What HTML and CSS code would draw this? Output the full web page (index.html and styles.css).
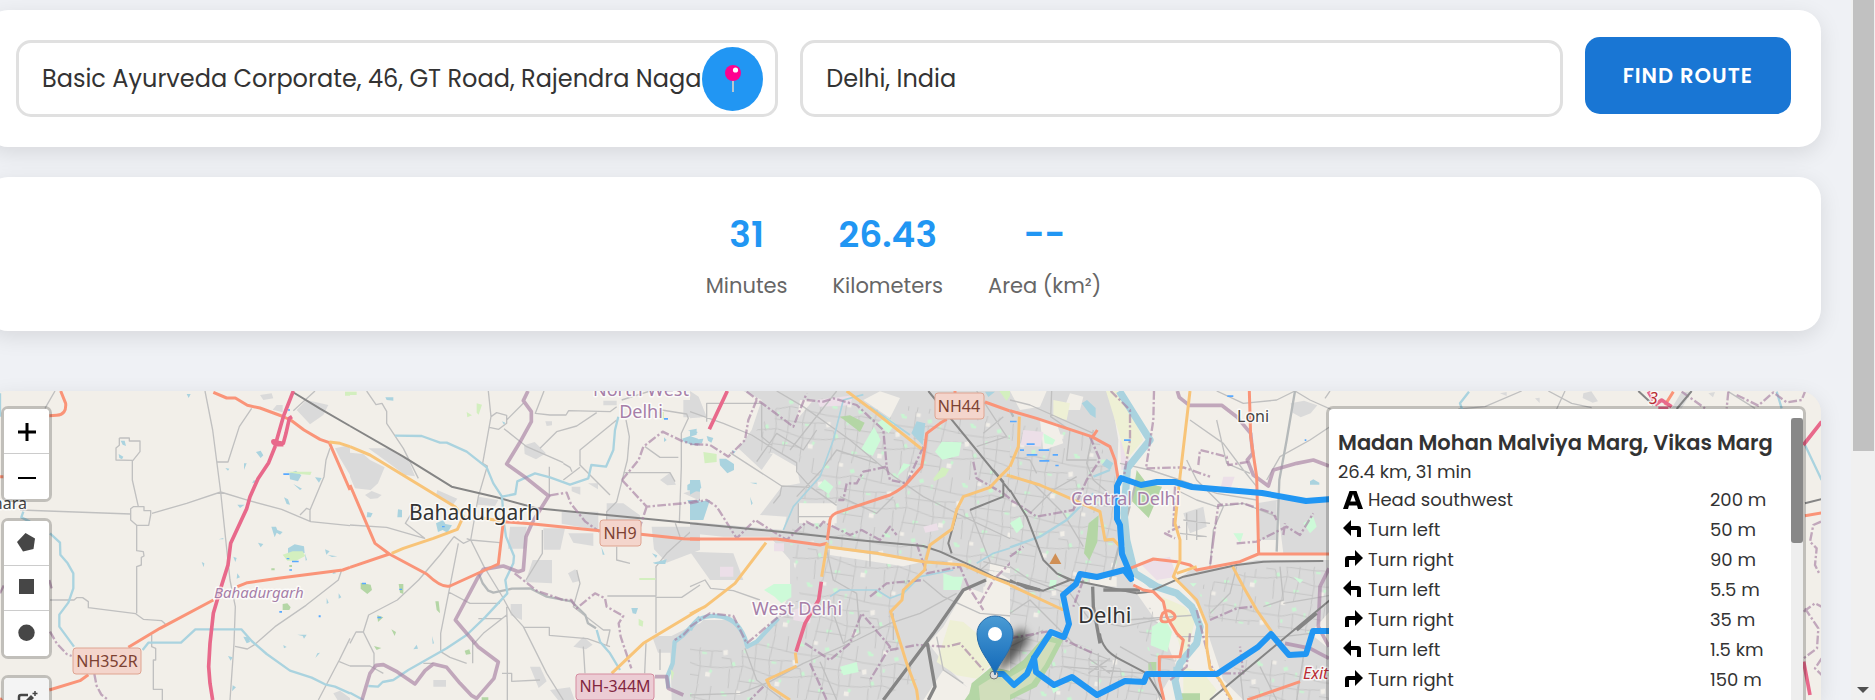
FILE: index.html
```html
<!DOCTYPE html>
<html lang="en">
<head>
<meta charset="utf-8">
<title>Route finder</title>
<meta name="viewport" content="width=device-width, initial-scale=1">
<link rel="stylesheet" href="styles.css">
</head>
<body>
<div class="page">
<main class="content">
  <form class="card search">
    <div class="field">
      <input class="field-input" type="text" aria-label="Start location" value="Basic Ayurveda Corporate, 46, GT Road, Rajendra Nagar">
      <button class="locate" type="button" aria-label="Use my location">
        <svg width="24" height="28" viewBox="0 0 24 28" aria-hidden="true"><path d="M12 13v14" stroke="#b9c6d0" stroke-width="2"/><circle cx="12" cy="8" r="8" fill="#ff0090"/><circle cx="14.500" cy="5" r="2.600" fill="#fff"/></svg>
      </button>
    </div>
    <div class="field">
      <input class="field-input" type="text" aria-label="Destination" value="Delhi, India">
    </div>
    <button class="find" type="button">FIND ROUTE</button>
  </form>

  <section class="card stats">
    <div class="stat"><div class="stat-value">31</div><div class="stat-label">Minutes</div></div>
    <div class="stat"><div class="stat-value">26.43</div><div class="stat-label">Kilometers</div></div>
    <div class="stat"><div class="stat-value">--</div><div class="stat-label">Area (km²)</div></div>
  </section>

  <section class="map">
    <svg class="tiles" viewBox="-14 391 1836 309" preserveAspectRatio="xMinYMin slice" role="img" aria-label="Map of Delhi">
      <defs>
        <pattern id="streets" width="210" height="180" patternUnits="userSpaceOnUse" patternTransform="rotate(8)">
          <path class="fleck-mint" d="M10 12h12v5h8v8h-14zM92 20l12-4 4 10-12 5zM150 82h14v6h-14zM30 104l10-6 5 12-9 4zM90 144h16v6h-6v6h-10zM64 58h6v10h-6zM180 130l8 4-4 9-6-2zM130 30h6v14h-6z"/>
          <path class="fleck-land" d="M56 4h14v10h-14zM2 70l13-4 2 14-12 4zM168 140h14v14h-14z"/>
          <path class="lane" d="M0 48h66l36-12 108 12M56 0v48l10 56-8 76M0 122l70-14 80 18 60-4M150 0l-8 80 8 46-2 54M98 36l4 82-8 62M58 80h84M142 80l68-8M0 92h28l8 28M190 0v48M180 76v48M28 122l4 58M58 154h92"/>
        </pattern>
        <linearGradient id="pin" x1="0" y1="0" x2="0" y2="1"><stop offset="0" stop-color="#4a9bd4"/><stop offset="1" stop-color="#1268b8"/></linearGradient>
        <filter id="soft" x="-50%" y="-50%" width="200%" height="200%"><feGaussianBlur stdDeviation="4"/></filter>
      </defs>
      <rect class="land" x="-14" y="391" width="1836" height="1200"/>

      <!-- western farmland -->
      <g transform="translate(0 380) scale(.33333)">
        <path class="town" d="M890 90l30-30 65 15-15 30-40 28zM1005 205l45-10v90l-30-50zM780 45l35-5 5 15-30 5zM830 75l18 0v22l-30-8zM1000 940l20-8 30 22v10h-35z"/>
        <path class="minor" d="M615 33L638 150 662 336 690 600 706 680 702 790 690 960M662 336L747 362 845 388 932 425 1050 437M662 336L560 370 456 400M392 402L60 390M397 240V300L415 380M358 174H388V183H420V215L399 241 348 240V204L358 196V174M400 380H432V392H452V405L446 436H410L392 420V386zM410 436V512L430 515 432 528 424 532V555L410 560V700M150 660H222L230 653H248L265 665V683L407 701 430 718 485 722 496 732M652 246H684L718 140 755 85M455 765V800L467 805V840H460V928H487V960M990 205L978 240 972 290 930 390V425M1025 570L1015 600 918 676 825 740 765 793 742 807 705 799M1050 775L1018 840 955 960M1018 845L1050 858M880 92L945 33M135 85L165 33M900 405L920 385 932 390"/>
        <path class="rail" d="M878 36L960 86 1050 138"/>
        <path class="water" d="M150 460L180 488 181 524 203 550 220 580V625L205 668 178 704V740L222 800M428 810L445 788H543L586 748H724L755 783 800 822 870 872 935 893 975 913 1005 920 1050 940M0 40V110M70 395L64 412 90 425"/>
        <path class="pond" d="M868 280l20-8 16 14-10 18-24-6zM864 505l20-12 28 6 2 20-50 0zM768 216l14-4 8 14-8 8zM814 440l14 0 4 10 16 6-8 8-10-6-6 14zM852 352l12 6 6 16-10-2zM774 488l16 4-8 10zM730 770l16 2 4 14-10 4zM684 828l14 4-6 10zM362 182h12l4 16-10-4zM356 222l14 8-4 8-8-4zM560 42h12l-6 12zM676 264l12 2-4 6zM732 250l8 0-8 20zM762 300l8 6-14 4zM700 530l10 4-4 12zM605 546l8 4-2 12zM656 478l14-4v4zM945 292l20 2-8 14zM880 312l26 14-6 4zM892 764h28l-8 12-4-8zM946 834l6-14 8-2zM975 508l14 6-10 10zM984 525l28 4-16 2zM1000 570l8 10-10 2zM1016 640l8 12-8 4zM850 795l10 6-8 4zM698 916l10 6-12 12zM980 654l6 14-6 4zM712 374l22 0-14 10zM712 580l8 12-10 4zM915 520l6 20-4 2z"/>
        <path class="park-lime" d="M848 524l30-10h30l8 14-28 14h-26zM855 275h80l-4 10-40-4zM1035 35h15v12h-15z"/>
        <path class="park" d="M848 672l14-2 10 12-4 8h-20zM814 565h10v6h-10zM868 555h8v6h-8z"/>
        <path class="fleck-blue" d="M850 280h18v5h-18zM860 534h8v4h-8zM876 542h20v5h-20zM868 568h8v4h-8zM838 693h8v5h-8zM956 706h6v6h-6zM864 88h6v4h-6z"/>
        <path class="border-line" d="M150 755L170 790 200 822 215 828M283 882L290 918 304 944 325 960M148 600L155 625M0 640L12 615"/>
        <path class="trunk" d="M182 33L197 70Q200 104 170 106L148 107M640 37L680 54H706L742 76 780 84 845 108 872 120 912 150 960 178 988 188 1050 330M148 930L240 902 265 884M385 802L480 745 640 660M712 620L742 608 835 595 1028 570 1050 562M0 290H10M0 960L6 955"/>
        <path class="secondary" d="M988 186L1020 190 1050 200"/>
        <path class="motorway" d="M880 33L850 110 829 184 836 188 850 190 858 160 868 115 876 110M829 184Q815 180 820 188T850 194M826 198L806 248 774 296 750 350 740 386 692 490 684 555 662 625 640 700 630 790 626 860 630 910 638 960"/>
      </g>

      <!-- Bahadurgarh and the north-west -->
      <g transform="translate(350 380) scale(.33333)">
        <path class="town" d="M0 218L40 222 60 240 104 262 84 310 62 330 15 325 0 290zM55 205l60 0 30 20 30 14 20 50-30-4-60-44zM262 330l60 26-14 20-50-30zM45 345l20-12 30 12-12 10-22 2zM385 350l60 10-10 18-52-4zM480 440h50l-6 66h-50zM580 445h65l-14 64h-50zM635 395h110v56l-110-20zM655 460h75v38l-60-10zM770 370h50l50 36v40H770zM905 440h145v70l-100 38-38-40zM548 540h58v70l-80-4zM522 196l32-10 34 34-30 18-34-16zM665 320h26v24l-26-10zM714 310h30v18zM930 300l30-22 18 36-26 2zM654 580l22-12 14 34-22 6zM482 672h34v48l-34-14zM670 800l30-30 28 24-20 14zM760 62h40v14h-40zM586 124l20 0v12l-16 2zM1000 60h50v52h-50zM540 860l30 0 20 44-24 20zM250 900h38v20h-38zM600 930l60-8 14 38h-50zM960 770l60-30 30-10v230H965zM906 768h58v50h-40zM1000 340l50-18v40z"/>
        <path class="minor" d="M50 33L78 74 96 70 110 94V130L160 205 205 295M415 33L423 110 398 250 412 258 385 350 362 480 350 476M423 110L440 98 470 106V130L446 148 418 142M470 120L520 70M462 146L530 200 640 248M582 33L556 100 600 105H648L656 92 780 95 800 80M740 98L680 138 620 155 570 205 M598 260V350M800 120L690 210V255L780 345M690 262L640 300M828 120L838 170 832 240 800 365 770 395V440M820 278H960L975 305M935 90L1010 102 1015 115 994 160V260L988 430M815 60L900 33M885 200L930 232H985M0 435L110 442 224 475 166 430 200 375M0 790L18 756H40L72 820V862M40 756L56 705 142 660 206 600 270 525 312 470M325 490L298 628 272 760V815L300 832 350 850M312 470L340 490 362 480 450 488M362 480L402 560 456 648 484 700 520 740 590 880 640 960M470 680L472 740V960M520 742H598V766L712 776 780 800M700 800L705 880M577 450V520L528 600M800 500V540L840 550M680 570L690 610 670 680 760 750H780L770 795M772 648H918V560L950 520 1050 430M918 652H995L1050 615M918 650V760M888 790L884 880M930 808V870M976 430L990 470M296 636L360 670H450M385 716H455M470 705L400 760 368 795M368 780V850M0 858H60L100 880M250 850H220M456 880H485V904L570 900M640 250L660 262 666 275"/>
        <path class="road" d="M386 580L398 610 415 632 430 638 486 626 540 625 590 650 664 664 706 705 714 730 738 745"/>
        <path class="rail" d="M0 138L160 230 305 320 440 352 560 385 700 398 1050 432"/>
        <path class="water" d="M135 167L215 168 270 188H290L350 215 410 262 430 310 456 350 462 430 468 470 492 528 490 550 466 600 472 640 405 712 350 765 290 805 175 870 130 900 98 906 84 920 55 918M456 350L496 342 502 304 555 280 600 292 660 314 715 295 724 255 768 260 790 210 795 150 805 110M740 750L750 785 780 820 810 870M0 938L40 960"/>
        <path class="river" d="M1050 712L1000 765 974 785 968 850 952 890 955 925"/>
        <path class="pond" d="M144 388l12 2v22h-14zM258 430l22-10 6 12 20 4-14 22-14-8-14 6zM52 396l16 4-6 12-12 0zM996 176l24-8 24 8 6 20-22 0-26-10zM1012 315l20-12 18 8v24l-38-4zM844 684l20 0-6 18-10-2zM906 520l16 6-4 8zM908 548l20-4 22-6-4 14-30 0zM106 52l24 0 0 10-20-2zM456 124l10 4-4 6zM942 172l8 8-8 6zM1014 150l30 6-10 8zM754 500l10 24-6 0zM190 808l10-14 4 12zM246 768l6 22-4 2zM1012 360l36 0v8l-30 4z"/>
        <path class="park" d="M32 608l30 6 4 16-14 12-20-16zM146 612h14v30l-10-4zM256 664l10 0 4 36-10-10zM82 706l18 6-16 14zM124 748l14 8-4 12zM72 798l22 6-14 6zM344 812l14-4 4 14-14 2zM395 952h20v8h-20z"/>
        <path class="park-lime" d="M350 96l16 10-14 6zM380 70l16 4-10 30-6-6zM868 594h48v6h-48zM866 716l14 8-2 16-12-4zM962 868l10 10-6 24zM924 96h18v22h-14zM0 35h20v10h-20z"/>
        <path class="fleck-blue" d="M36 608h12v5h-12zM82 710h12v5h-12zM942 114h12v5h-12zM148 626h8v4h-8zM1020 180h14v5h-14zM276 438h8v4h-8z"/>
        <path class="boundary" d="M534 33L520 62 544 95V125L508 190 470 252 530 295 596 348 548 425 528 470 520 570 505 575 460 558 400 568 385 590 316 720 384 800 445 846 432 895 380 955 364 946 330 910 290 862 250 852 225 872 195 912 142 876 100 854 78 856 60 880 36 960M915 890H950L955 925 1000 945"/>
        <path class="border-line" d="M600 346L650 338 662 370 705 424 748 455M494 580L560 632 640 660H664L680 685 735 640 765 655 770 680 820 708 806 730 812 770 844 865M816 300L866 240 880 200 938 155 1000 185 1050 195M816 300L890 380 1000 370 1050 360M890 380L870 440M1050 712L1000 765 974 780"/>
        <path class="trunk" d="M0 315L75 490 118 522 230 582Q275 625 300 618L445 552 460 425 550 432 750 452M872 463L1000 476 1050 478M118 522L0 562"/>
        <path class="secondary" d="M0 200L60 225 315 380 340 410 322 448 250 475 160 505 125 520M400 415L460 424M785 880L880 790 920 766 1050 688"/>
      </g>

      <!-- West Delhi -->
      <g transform="translate(690 380) scale(.33333)">
        <path class="town" d="M160 33H990V620L900 560 880 640 830 620 760 740 715 790 770 860 830 920 720 960H0V760L40 720 140 720 170 800 250 740 300 640V540L240 470H100L0 460V425L280 450 290 410 210 405 275 320 330 310 320 260 250 220 215 270 145 205 185 150 215 60zM0 33L26 50 50 110 0 115zM0 515L130 520 160 600 60 600z"/>
        <path class="streets" d="M280 60L430 50 990 120V580L700 560 300 470 340 330 390 300 320 240 150 200 200 150zM300 490L700 560 640 640 600 700 680 900 560 960H0V800L160 810 260 730 330 650z"/>
        <path class="fleck-land" d="M325 370H440V430H325zM520 60l50-26 60 20-30 60zM420 505l280 40-60 14-220-34zM880 620l110-20v120l-60 20-50-80zM330 60l40 0-50 60zM900 550l70 10-10 20-60-10zM700 960l60-90 70 50-20 40z"/>
        <path class="pink-zone" d="M380 60l110-14-10 30-90 4zM310 690l60-20-10 60-50-10zM90 560h40v30h-40zM700 440l40-10 6 20-40 8zM252 490h30v24h-30z"/>
        <path class="farm" d="M780 720l40 6 60 50 40 60-60 60-60-10-60-40z"/>
        <path class="park" d="M450 110l30-4 44 22-14 28zM845 910l60-50 85 20v80H824l14-20z"/>
        <path class="park-pale" d="M866 918l54-34 70 10v66h-120z"/>
        <path class="park-lime" d="M40 216l40 6v24l-36 4zM730 296l26-34 22 6-12 20-34 16zM928 33h42l-20 30z"/>
        <path class="park-mint" d="M735 215l20-30 60 2-8 40-50 12zM222 630l30-18h52l0 40-30 18-20-20zM512 210l40-70 20 40-24 48zM384 320l20-22 26 22-14 22zM560 130l30-20 26 20-20 30zM450 860l50-14 6 30-46 10zM620 290l20-40 22 4zM760 580l30 10 30 0-10 40-50 0z"/>
        <path class="pond" d="M88 236l20 0 24 16 0 18-20 10-22-24zM664 160l16-36 26 6-8 66zM0 300l30 0 4 24-34 20zM0 370l60-10-20 60H0zM0 150l20-4 0 18-20 6zM0 180l40-4-4 14-36 2zM50 168l20 6-6 14-10-6zM885 35l30 0-20 16zM125 210l12 4-6 8zM180 350l8 20-4 6zM180 308h20v5z"/>
        <path class="minor" d="M50 125V70H215V170L245 195M0 95L100 130 185 165 260 212 320 248V275L360 320 440 376M260 33L340 80 480 180 610 288 700 350 800 400 990 490M120 218L275 318 360 322M275 318L270 345 250 370M325 370V430M325 410H420M320 350L395 270 440 210 560 250M0 620L45 600 62 625 130 632 210 660M0 945L150 940 240 905 340 850 500 780 600 730 690 700 800 640M165 805L200 900 280 960M390 845L440 960M610 700V780M700 600L760 650 870 700 990 710M450 350L560 400 610 350 M300 210L440 33M380 150L340 210 260 160 200 245M540 470V560M410 510L430 600 500 640M840 390L900 545 860 580M880 545L990 570M740 770L760 870 820 910M860 33L950 170 860 200M940 110L880 160M500 640L510 760 460 790 430 700"/>
        <path class="water thin" d="M520 44L460 60 430 180 390 290 310 380 280 450M420 650L450 630 560 630 600 655 640 640 690 590 790 570M860 550L910 520 990 495M540 80L660 165"/>
        <path class="river" d="M0 750Q20 705 80 708T165 775L172 800 200 785 265 715"/>
        <path class="border-line" d="M200 60L175 120 165 180 115 230 60 195 0 192M170 35L310 140 350 40M350 60L400 65 430 55 500 75 580 150 590 260 520 275 500 310 470 310 460 360 445 360M590 260L600 300 650 310 700 200M0 370L50 360 80 380 140 475 195 420 290 480 350 425 385 445 400 425 480 465 515 450 570 480 600 440 620 465M680 490L710 580 810 560 835 620 880 690 M540 650L590 610 700 600M345 790L420 840 480 790 515 700 600 800 540 900M600 810L680 795 770 800 810 790 880 870M360 850L410 960M870 670L910 600 990 520M850 245L860 295 940 340 990 380M0 740L60 700 130 708 170 790 290 690M220 920L180 960"/>
        <path class="rail" d="M0 430L300 458 500 480 700 498 750 515 850 560 910 590 990 615M715 33L990 370M840 390L940 350V305L910 270M800 400L775 490 785 520"/>
        <path class="rail wide" d="M888 600L820 630 730 760 580 960M712 790L735 920 715 960"/>
        <path class="trunk" d="M0 477H260L390 495 412 490M412 480L420 420Q424 402 450 395L600 345Q640 325 655 305L695 260 705 200 710 160 750 130 770 118M885 66L990 104M795 33V50"/>
        <path class="secondary" d="M470 33L560 100 695 207M410 500L560 520 700 545 820 555 900 590 990 625M228 488L135 610 45 680 0 702M412 488L395 590M708 540L720 495 785 448 800 390 820 350 900 322 930 290 970 250 985 200 990 110M706 545L704 570 640 630 636 660 602 695 650 850 680 930 684 960M316 818L320 850M320 858L230 900 240 920 300 960M950 285L990 295"/>
        <path class="motorway" d="M112 33L58 148M394 605L386 660 345 730 318 815"/>
      </g>

      <!-- Delhi and the Yamuna -->
      <g transform="translate(1010 380) scale(.33333)">
        <path class="town" d="M0 33H300L325 180 320 300 340 520 380 640 450 740 500 860 440 960H0zM505 600L540 570 640 560 740 540H990V660L900 760 950 800 990 790V960H700L640 900 600 780 580 700zM800 360l160-10 30 40v130H820zM842 70l40-8 40 14-20 24-30 12-24-14zM740 370l60-10v120h-50zM520 400l60-20 10 60-50 20z"/>
        <path class="streets" d="M0 130L260 170 320 300V560L160 640 170 780 340 840 440 940V960H0zM560 620L760 560H990V660L900 760 760 740 600 720zM660 840L990 840V960H720zM420 680L500 840 460 900 380 740z"/>
        <path class="fleck-land" d="M0 33L110 33 90 80 30 90zM350 440l140-40 10 140-80-6-60 20zM90 120l50 10 20 60-60 20zM240 590l80 0 0 30-80-6zM180 40l40 10-10 40-50 0z"/>
        <path class="pink-zone" d="M40 150l60 6-8 44-60-4zM390 550l90-20 20 60-60 10zM640 290l34 0-14 40-30 0zM530 905l80 10-20 30-60-10zM330 180l30 30-6 60-20 0z"/>
        <path class="farm" d="M288 33H322L370 110 400 180 350 240 330 170zM455 650l70 30 30 40-30 130-30-100zM520 860l60 20 40 50-20 30h-80zM130 60l50 10-10 50-40-10z"/>
        <path class="park" d="M380 270l30 40 46 10-40 94-50-50zM236 430l30-24-4 80-24 54-16-20zM106 765l54 15-42 80-38 60-80 40V870l40-30zM510 940l60 0v20h-60zM415 846h24v26h-24z"/>
        <path class="park-pale" d="M112 784l26 6-34 64-40 56-64 34V892l56-34z"/>
        <path class="park-mint" d="M426 740l40-24 20 40-14 60-50-20zM120 600l20 0-4 30-20 0zM670 460l30 0-10 30zM100 160l36 20-8 14-24-4zM0 430l30-20 10 30-20 20zM850 590l30 10-10 10zM880 430l30-20 10 30-20 20zM120 910l30 16-20 14zM540 610l20 0-10 10z"/>
        <path class="minor" d="M125 33L122 110 180 150 170 240 260 240M0 60L60 75 250 160M330 250L420 270 510 300 620 340 740 360M250 150L230 250 250 300 320 360M600 560L610 450 640 380 560 300 530 240 M540 120L640 190 700 270 740 320M770 300L810 230 900 180 990 120M855 33L900 60 990 100M620 33L700 70 800 60 855 33M500 330L560 360 620 380 700 370 800 410M350 720L560 705M500 770H820L990 750M180 640L240 720 340 740 460 715M0 700L60 660 200 800 300 840M0 800L100 750M170 640L60 600 0 560M60 400L130 330 200 290M60 300L160 400 220 500M760 680L820 660 810 560M680 560L660 640 600 700M820 670L940 650 990 640M330 800L420 850 450 960M0 230L60 240 80 280M240 860H290M265 820V960M235 835L300 880M235 880L300 835M160 860L400 880M320 820L290 960M690 870L700 960M750 860L800 960M880 830L860 960M520 420L600 430M510 460L590 470M530 400V480M560 390V480M620 120L650 250 720 280"/>
        <path class="road" d="M855 33L830 180 808 300 800 515M0 90L10 110M380 300L300 600"/>
        <path class="river wide" d="M328 33L420 180 352 265 342 400 350 480 372 570"/>
        <path class="river wide" d="M345 500L375 580 440 620 500 640 545 680 570 740 560 790 510 850 495 900 508 960"/>
        <path class="water" d="M345 380L350 560 420 620 490 630 560 690M250 340L170 420 90 470 0 502M300 270L250 290"/>
        <path class="pond" d="M290 236l20 14-10 20-24-16zM900 304l10-6 18 10v6h-28zM215 70l16-10 26 24 0 30-16-10zM490 860h30v30h-30z"/>
        <path class="fleck-blue" d="M0 122h20v5H0zM50 190h24v5H50zM30 208h12v5H30zM86 208h32v5H86zM50 222h32v5H50zM128 222h16v5h-16zM88 240h30v5H88zM136 254h10v5h-10zM342 178h20v5h-20zM652 46h18v5h-18zM884 178h5v5h-5z"/>
        <path class="boundary" d="M502 33L508 52 538 76H635L680 110 722 160 728 220 712 240 730 285 775 318 790 270 860 250 910 240 957 258M957 565L930 620 925 740 957 800M825 790L900 805 957 835"/>
        <path class="border-line" d="M302 33L360 90V180L340 300M432 33L430 120 408 265 520 262 600 290M510 440L465 460 495 475 M495 320L490 440M565 255L570 210 650 230 655 255 720 245M610 480L625 375 700 370 790 400 800 420M610 480L600 560M680 490L740 485 830 440 870 465 910 400M820 465L825 430M600 720L680 685 730 680M240 170L270 240 230 300 190 390 80 410 20 370 0 360M0 530L40 500M0 775L110 755 250 820M220 600L190 680M560 690L600 850 660 960M540 760L530 860 480 900M590 880L700 880 690 800"/>
        <path class="rail" d="M0 330L50 410 100 540 140 580 185 600 380 640 420 635 520 590 680 555 760 545 940 543M140 580L180 600 100 632 0 605M270 760Q275 810 330 838L410 880 460 960M960 660L780 810 600 960M0 600L50 625 100 632"/>
        <path class="rail wide" d="M248 620L250 680 270 790M280 630H390M20 610L90 630M860 750L920 700"/>
        <path class="trunk" d="M0 92L80 115 245 170 300 200 315 240 325 300M245 175L262 150M718 33L722 170 740 290 746 520M360 565L430 537 500 545 540 555 560 570 690 545 745 522H957M370 615L400 630 430 635 460 665 470 710 500 760 520 780 510 830H448V900L462 960M712 960L870 905M458 700Q474 684 490 700T474 724 458 700z"/>
        <path class="secondary" d="M28 110L25 200 0 260M0 288L90 315 270 395 285 480 310 478 330 500M540 33L510 290 495 430 510 480V540L490 590 560 660 590 735V800L600 865 630 900 665 960M668 560L700 620 740 690 785 755M0 615L160 690M500 580L560 560"/>
        <path class="peak" d="M118 552L136 520 154 552z"/>
      </g>

      <!-- eastern strip -->
      <g transform="translate(1325 385) scale(.33333)">
        <path class="town" d="M775 25l24-6 20 30-16 4-30-14zM1070 20h30l-30 50h-30zM525 25l20-4 0 12zM630 40l14-2 0 16zM1150 25l20-4-6 16z"/>
        <path class="minor" d="M400 72L480 65 590 18M695 72L720 18M670 18L740 55 800 68M0 40L15 18M1210 20L1290 70"/>
        <path class="water" d="M432 20L405 55 412 75M1355 20L1370 70M1440 180L1490 285"/>
        <path class="border-line" d="M1070 20L1140 70M1210 20L1205 70M1235 30L1300 62 1345 22 1385 52 1430 45 1440 20"/>
        <path class="rail" d="M1100 18L1055 72M940 18L985 60M1440 355L1490 342"/>
        <path class="trunk" d="M1045 20L1020 60M1440 392L1490 384"/>
        <path class="motorway" d="M990 60L1010 45 1040 65M970 20L985 45M1435 180L1490 110M1436 830L1455 930M1000 70H1030"/>
        <path class="border-line" d="M1488 410L1465 420 1455 470 1475 490 1470 540 1485 570M1436 680L1470 655 1490 665M1440 670L1480 730 1476 790 1436 820M1490 820L1470 850 1490 870"/>
      </g>

      <g class="route">
        <path d="M1131 576L1127 566 1122 554 1120 525 1117 519V486L1121 478 1141 485 1157 482H1175L1192 487 1262 493 1306 501 1332 499"/>
        <path d="M1131 579L1124 570 1097 577 1080 574 1076 584 1063 595 1069 624 1064 637 1051 632 1034 658 1027 674 1014 685 1003 674 995 674"/>
        <path d="M1034 658L1036 672 1054 685 1072 677 1097 695 1125 681 1144 682 1147 674H1217L1258 647 1271 634 1289 655 1306 654 1313 631H1332"/>
      </g>

      <g class="shields">
        <rect x="73" y="648" width="68" height="26" rx="3"/><text x="107" y="667">NH352R</text>
        <rect x="600" y="520" width="41" height="26" rx="3"/><text x="620" y="539">NH9</text>
        <rect x="935" y="393" width="49" height="26" rx="3"/><text x="959" y="412">NH44</text>
        <g class="shield-pink"><rect x="576" y="674" width="78" height="26" rx="3"/><text x="615" y="692">NH-344M</text></g>
      </g>
      <g class="places">
        <text class="place-city west" x="409" y="520">Bahadurgarh</text>
        <text class="place-city" x="1078" y="623">Delhi</text>
        <text class="place-town" x="1237" y="422">Loni</text>
        <text class="place-town end" x="27" y="509">hara</text>
        <text class="place-area mid" x="641" y="396">North West</text>
        <text class="place-area mid" x="641" y="418">Delhi</text>
        <text class="place-area" x="752" y="615">West Delhi</text>
        <text class="place-area" x="1071" y="505">Central Delhi</text>
        <text class="place-area small" x="214" y="598">Bahadurgarh</text>
        <text class="place-exit" x="1303" y="679">Exit 1</text>
        <text class="place-exit" x="1649" y="404">3</text>
      </g>
      <path class="pin-shadow" d="M996 675L1006 640 1022 628 1030 640 1010 664z"/>
      <circle cx="994" cy="675" r="4" fill="#ddd" stroke="#777"/>
      <path class="pin" d="M995 675C992 663 977 651 977 634A18 18 0 0 1 1013 634C1013 651 998 663 995 675z"/>
      <circle cx="995" cy="634" r="7" fill="#fff"/>
    </svg>

    <div class="controls">
      <div class="bar">
        <button class="tool" type="button" aria-label="Zoom in"><svg width="20" height="20" viewBox="0 0 20 20"><path d="M10 2v18M1 11h18" stroke="#000" stroke-width="3"/></svg></button>
        <button class="tool" type="button" aria-label="Zoom out"><svg width="20" height="20" viewBox="0 0 20 20"><path d="M1 11h18" stroke="#000" stroke-width="2"/></svg></button>
      </div>
      <div class="bar">
        <button class="tool" type="button" aria-label="Draw a polygon"><svg width="20" height="20" viewBox="0 0 20 20"><path d="M8.500 0L18 5.500 16.500 16 6 18.500 0 9z" fill="#464646"/></svg></button>
        <button class="tool" type="button" aria-label="Draw a rectangle"><svg width="20" height="20" viewBox="0 0 20 20"><path d="M2 1h15v15H2z" fill="#464646"/></svg></button>
        <button class="tool" type="button" aria-label="Draw a circle"><svg width="20" height="20" viewBox="0 0 20 20"><circle cx="9.500" cy="8.800" r="8.200" fill="#464646"/></svg></button>
      </div>
      <div class="bar">
        <button class="tool muted" type="button" aria-label="Edit layers"><svg width="22" height="22" viewBox="0 0 22 22" fill="none" stroke="#464646" stroke-width="2.500"><path d="M12 6H5Q3 6 3 8v10q0 2 2 2h9q2 0 2-2v-5"/><path d="M8 16l1-4 6-6 3 3-6 6z" fill="#464646" stroke="none"/><path d="M19 2v5M16.500 4.500h5" stroke-width="1.500"/></svg></button>
        <button class="tool muted" type="button" aria-label="Delete layers"></button>
      </div>
    </div>

    <aside class="directions">
      <div class="directions-body">
        <h2 class="directions-title">Madan Mohan Malviya Marg, Vikas Marg</h2>
        <p class="directions-sum">26.4 km, 31 min</p>
        <table class="steps">
          <tbody>
            <tr><td class="step-icon"><svg width="20" height="20" viewBox="0 0 20 20"><path fill-rule="evenodd" d="M0 19L6.500 1h7L20 19h-5l-1-3.500H6L5 19zM7.300 11.500h5.400L10 4z"/></svg></td><td>Head southwest</td><td class="step-dist">200 m</td></tr>
            <tr><td class="step-icon"><svg width="20" height="20" viewBox="0 0 20 20"><path d="M0 8L8 0v6h7q3 0 3 3v8h-4v-7H8v6z"/></svg></td><td>Turn left</td><td class="step-dist">50 m</td></tr>
            <tr><td class="step-icon"><svg width="20" height="20" viewBox="0 0 20 20"><path d="M20 8L12 0v6H5q-3 0-3 3v8h4v-7h6v6z"/></svg></td><td>Turn right</td><td class="step-dist">90 m</td></tr>
            <tr><td class="step-icon"><svg width="20" height="20" viewBox="0 0 20 20"><path d="M0 8L8 0v6h7q3 0 3 3v8h-4v-7H8v6z"/></svg></td><td>Turn left</td><td class="step-dist">5.5 m</td></tr>
            <tr><td class="step-icon"><svg width="20" height="20" viewBox="0 0 20 20"><path d="M20 8L12 0v6H5q-3 0-3 3v8h4v-7h6v6z"/></svg></td><td>Turn right</td><td class="step-dist">35 m</td></tr>
            <tr><td class="step-icon"><svg width="20" height="20" viewBox="0 0 20 20"><path d="M0 8L8 0v6h7q3 0 3 3v8h-4v-7H8v6z"/></svg></td><td>Turn left</td><td class="step-dist">1.5 km</td></tr>
            <tr><td class="step-icon"><svg width="20" height="20" viewBox="0 0 20 20"><path d="M20 8L12 0v6H5q-3 0-3 3v8h4v-7h6v6z"/></svg></td><td>Turn right</td><td class="step-dist">150 m</td></tr>
          </tbody>
        </table>
      </div>
      <div class="panel-track"><div class="panel-thumb"></div></div>
    </aside>
  </section>
</main>
<div class="page-track" aria-hidden="true">
  <div class="page-thumb"></div>
  <svg width="12" height="6" viewBox="0 0 12 6"><path d="M0 0h12L6 6z" fill="#505050"/></svg>
</div>
</div>
</body>
</html>
```
FILE: styles.css
```css
* { box-sizing: border-box; }
body {
  margin: 0;
  overflow: hidden;
  background: #eff1f5;
  color: #333;
  font-family: Poppins, Inter, "Noto Sans", sans-serif;
}
button, input { font: inherit; color: inherit; }
.page { display: flex; height: 100vh; }
.content {
  flex: 1;
  min-width: 0;
  display: flex;
  flex-direction: column;
  gap: 30px;
  padding: 10px 30px 0 0;
  margin-left: -14px;
}
.card {
  flex: none;
  background: #fff;
  border-radius: 22px;
  box-shadow: 0 6px 22px rgba(0, 0, 0, .1);
}
.search {
  display: flex;
  align-items: flex-start;
  gap: 22px;
  padding: 30px;
}
.field { position: relative; flex: 1; }
.field-input {
  display: block;
  width: 100%;
  height: 77px;
  padding: 0 23px;
  border: 3px solid #e0e0e0;
  border-radius: 15px;
  background: #fff;
  font-size: 24px;
  outline: 0;
}
.locate {
  position: absolute;
  right: 15px;
  top: 7px;
  width: 61px;
  height: 64px;
  display: grid;
  place-items: center;
  padding: 0;
  border: 0;
  border-radius: 50%;
  background: #2196f3;
}
.find {
  height: 77px;
  margin-top: -3px;
  padding: 0 38px;
  border: 0;
  border-radius: 15px;
  background: #1976d4;
  color: #fff;
  font-size: 21px;
  font-weight: 600;
  letter-spacing: 1px;
  white-space: nowrap;
}
.stats {
  display: flex;
  justify-content: center;
  gap: 45px;
  padding: 31px 30px 29px;
  text-align: center;
}
.stat-value {
  color: #2196f3;
  font-size: 36px;
  font-weight: 600;
  line-height: 54px;
}
.stat-label {
  margin-top: 8px;
  color: #666;
  font-size: 21px;
  line-height: 32px;
}
.map {
  position: relative;
  flex: 1;
  min-height: 0;
  margin-top: 30px;
  overflow: hidden;
  border-radius: 22px 22px 0 0;
  background: #f2efe9;
  box-shadow: 0 6px 22px rgba(0, 0, 0, .1);
}
.tiles { display: block; width: 100%; height: 100%; }
.controls {
  position: absolute;
  left: 15px;
  top: 15px;
  display: flex;
  flex-direction: column;
  gap: 16px;
}
.bar {
  border: 3px solid rgba(0, 0, 0, .2);
  border-radius: 7px;
  background: #fff;
  background-clip: padding-box;
}
.tool {
  display: grid;
  place-items: center;
  width: 45px;
  height: 45px;
  padding: 0;
  border: 0;
  border-bottom: 1px solid #ccc;
  background: #fff;
}
.tool:first-child { border-radius: 4px 4px 0 0; }
.tool:last-child { border-bottom: 0; border-radius: 0 0 4px 4px; }
.tool.muted { background: #f4f4f4; }
.directions {
  position: absolute;
  top: 15px;
  right: 15px;
  bottom: -60px;
  display: flex;
  width: 480px;
  border: 3px solid rgba(0, 0, 0, .2);
  border-radius: 7px;
  background: #fff;
  background-clip: padding-box;
}
.directions-body { flex: 1; padding: 18px 9px; }
.directions-title {
  margin: 0;
  font-size: 21px;
  font-weight: 600;
  line-height: 32px;
  white-space: nowrap;
}
.directions-sum { margin: 0; font-size: 18px; line-height: 26px; }
.steps { width: 100%; border-collapse: collapse; font-size: 18px; line-height: 30px; }
.steps td { padding: 0; white-space: nowrap; }
.steps .step-icon { width: 30px; padding-left: 5px; }
.step-icon svg { display: block; }
.steps .step-dist { width: 72px; }
.panel-track { width: 12px; margin-top: 9px; background: #eee; }
.panel-thumb { height: 125px; border-radius: 3px; background: #888; }
.page-track {
  display: flex;
  flex-direction: column;
  align-items: center;
  justify-content: space-between;
  width: 24px;
  padding-bottom: 7px;
  background: #f0f0f0;
}
.page-thumb { width: 21px; height: 451px; background: #c1c1c1; }

/* map drawing */
.tiles path { fill: none; stroke-linejoin: round; }
.tiles .land { fill: #f2efe9; }
.tiles .town { fill: #dadada; }
.tiles .streets { fill: url(#streets); }
.tiles .fleck-mint { fill: #c9f5d2; }
.tiles .fleck-land { fill: #f2efe9; }
.tiles .lane { stroke: #c6c6c6; stroke-width: 3; }
.tiles .park { fill: #b4d6a5; }
.tiles .park-pale { fill: #d1debb; }
.tiles .park-lime { fill: #d3efbf; }
.tiles .park-mint { fill: #cdfad8; }
.tiles .farm { fill: #eef0d5; }
.tiles .pink-zone { fill: #ecdfe8; }
.tiles .pond { fill: #aad3df; }
.tiles .fleck-blue { fill: #58a9ff; }
.tiles .peak { fill: #d08f55; }
.tiles .minor { stroke: #c0c0c0; stroke-width: 4; }
.tiles .road { stroke: #b5b9ba; stroke-width: 7; }
.tiles .rail { stroke: #858585; stroke-width: 6; }
.tiles .rail.wide { stroke-width: 10; }
.tiles .water { stroke: #aad3df; stroke-width: 7; }
.tiles .water.thin { stroke-width: 5; }
.tiles .river { stroke: #aad3df; stroke-width: 13; }
.tiles .river.wide { stroke-width: 22; }
.tiles .boundary { stroke: #a67fa3; stroke-opacity: .65; stroke-width: 11; }
.tiles .border-line { stroke: #a67fa3; stroke-opacity: .65; stroke-width: 7; stroke-dasharray: 26 7 7 7; }
.tiles .trunk { stroke: #fa9478; stroke-width: 9; }
.tiles .secondary { stroke: #f8c478; stroke-width: 9; }
.tiles .motorway { stroke: #e8698b; stroke-width: 11; }
.tiles .route path { stroke: #2196f3; stroke-width: 6; stroke-linecap: round; }
.tiles text { font-family: "Noto Sans", sans-serif; paint-order: stroke; stroke: #fff; stroke-opacity: .75; stroke-width: 3; stroke-linejoin: round; }
.tiles .shields rect { fill: #f4d5cc; stroke: #dfa491; stroke-width: 1; }
.tiles .shields text { fill: #7c4132; stroke: none; font-size: 16px; text-anchor: middle; }
.tiles .shields .shield-pink rect { fill: #ecccd4; stroke: #d58b9f; }
.tiles .shields .shield-pink text { fill: #81263f; }
.tiles .place-city { fill: #333; font-size: 22px; }
.tiles .place-city.west { font-size: 21px; }
.tiles .place-town { fill: #444; font-size: 16px; }
.tiles .place-area { fill: #a67fa8; font-size: 18px; }
.tiles .place-area.small { font-size: 15px; font-style: italic; }
.tiles .place-exit { fill: #b92b33; font-size: 16px; font-style: italic; }
.tiles .mid { text-anchor: middle; }
.tiles .end { text-anchor: end; }
.tiles .pin { fill: url(#pin); stroke: #2a6da8; stroke-width: 1; }
.tiles .pin-shadow { fill: #000; fill-opacity: .6; filter: url(#soft); }
```
